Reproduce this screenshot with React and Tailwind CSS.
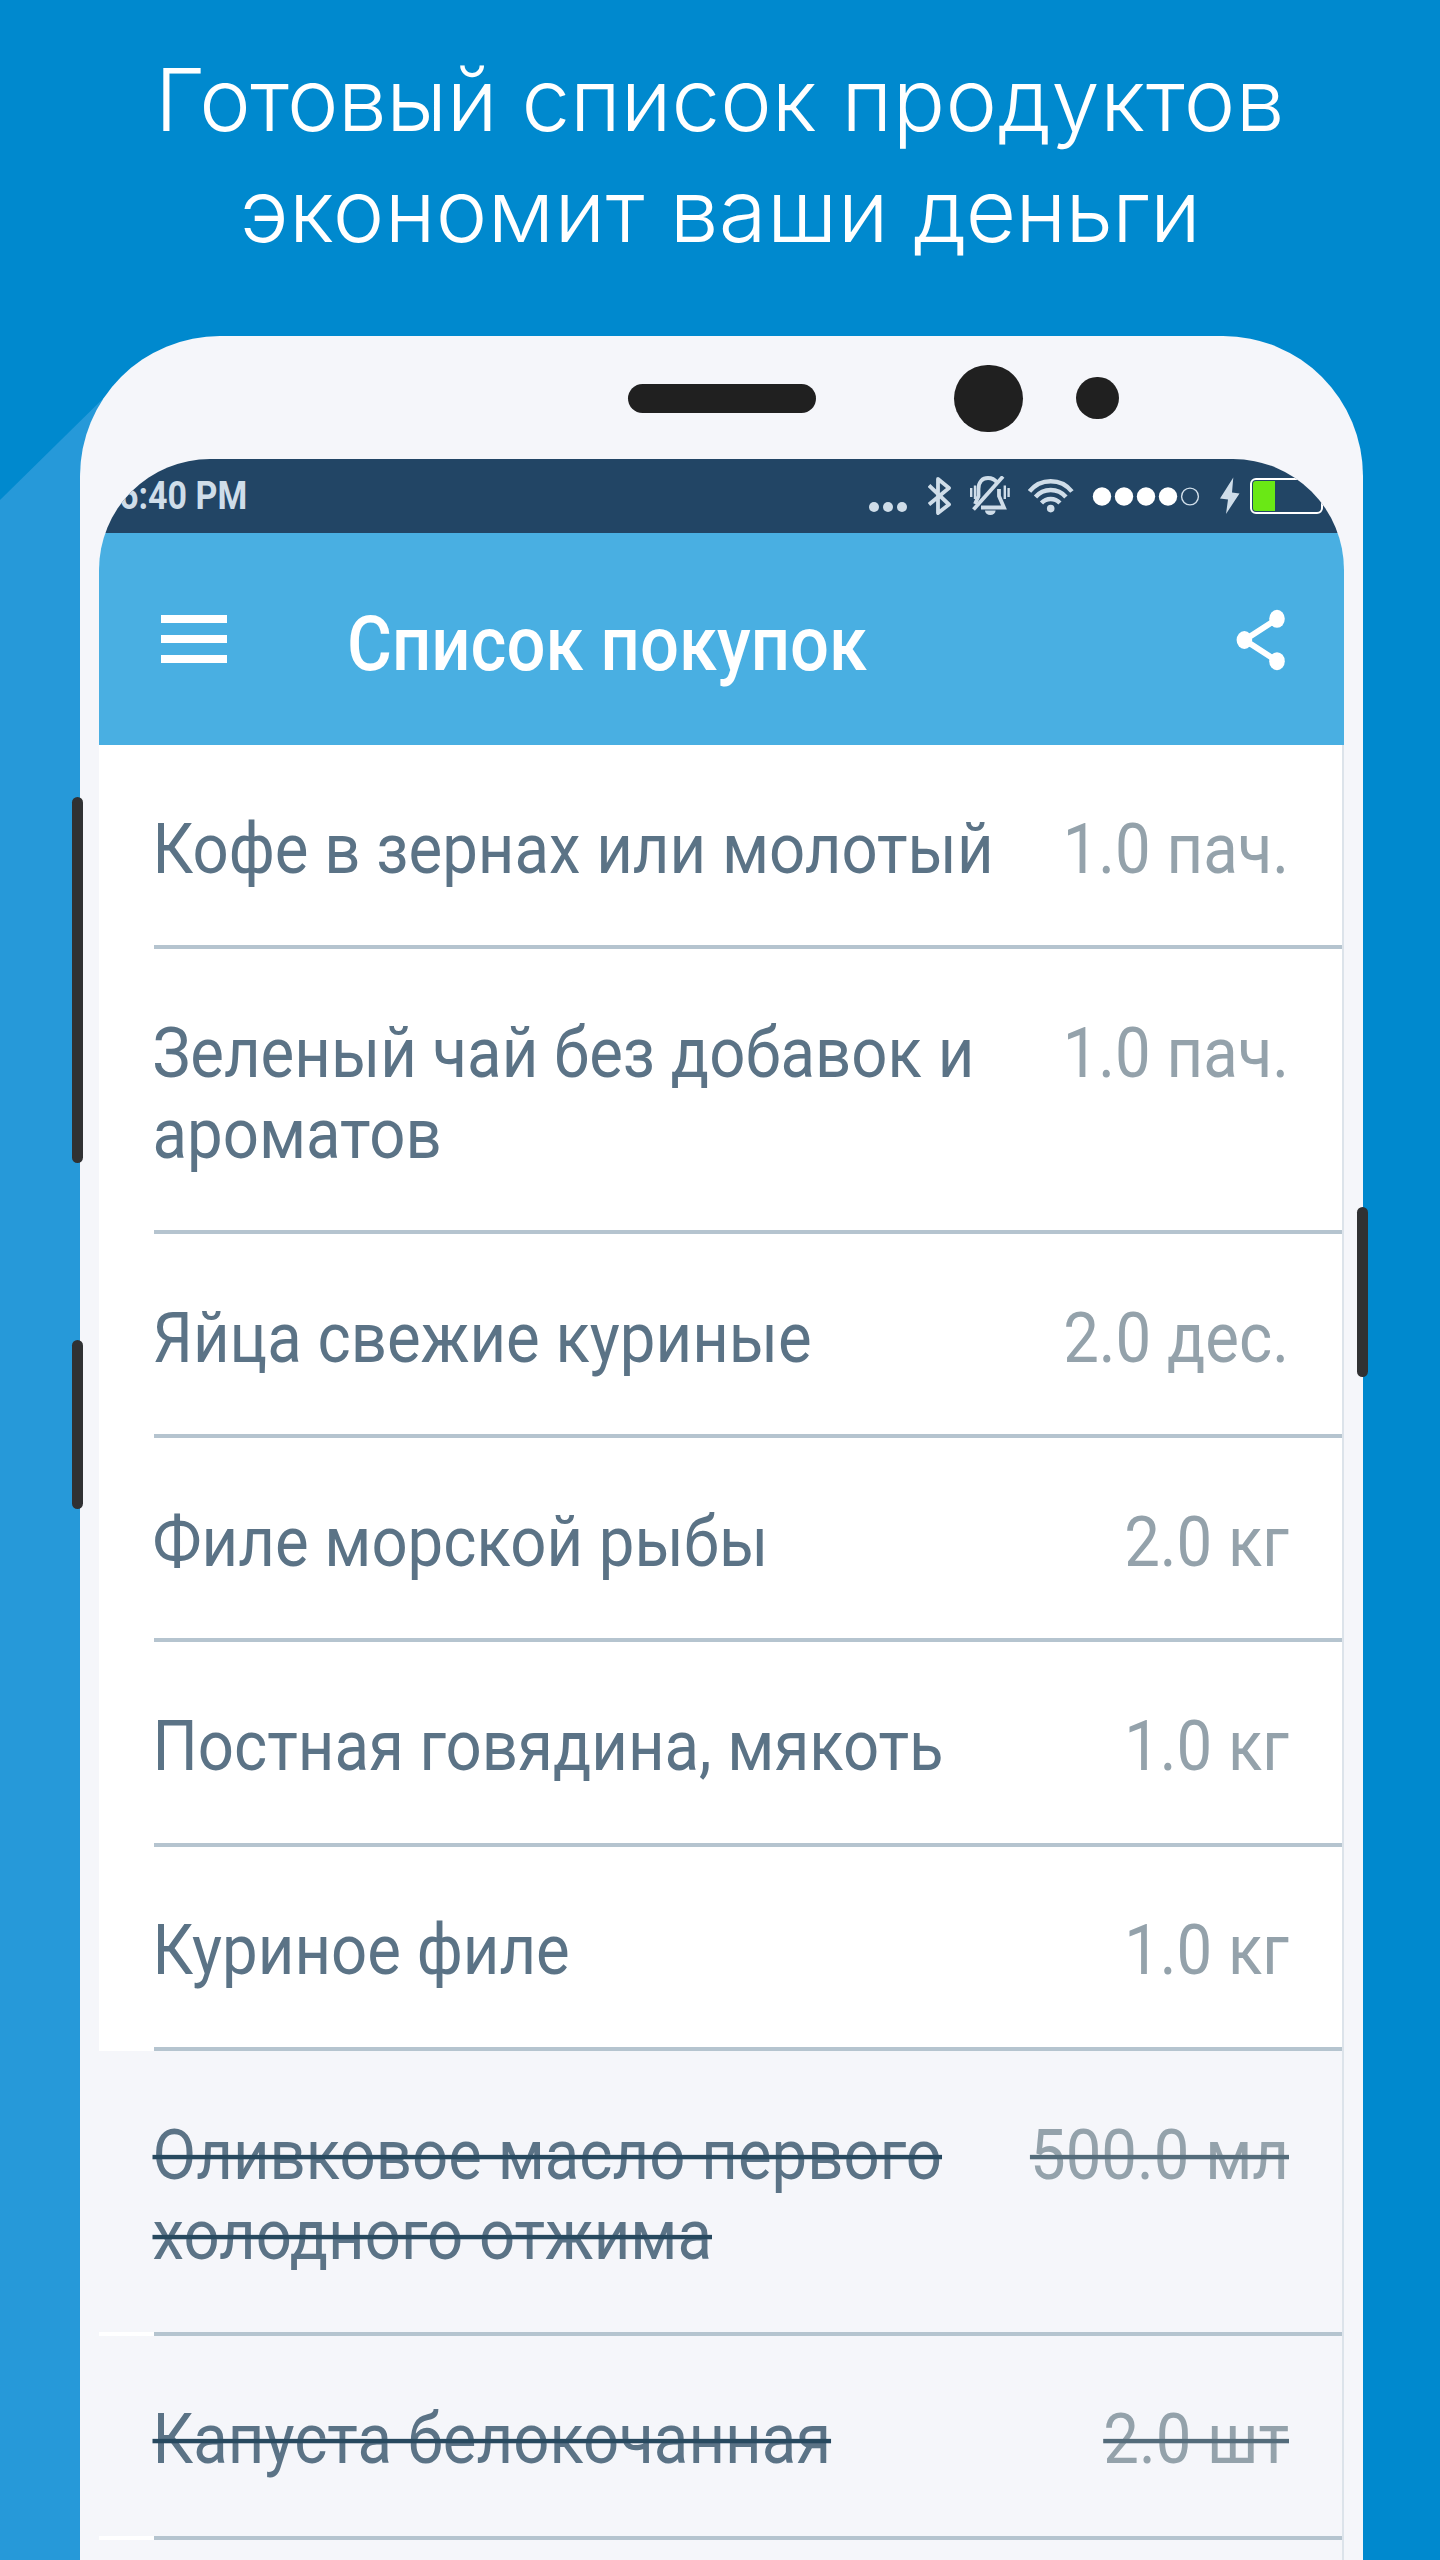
import clsx from "clsx";

const ITEMS = [
  { name: ["Кофе в зернах или молотый"], amount: "1.0 пач." },
  { name: ["Зеленый чай без добавок и", "ароматов"], amount: "1.0 пач." },
  { name: ["Яйца свежие куриные"], amount: "2.0 дес." },
  { name: ["Филе морской рыбы"], amount: "2.0 кг" },
  { name: ["Постная говядина, мякоть"], amount: "1.0 кг" },
  { name: ["Куриное филе"], amount: "1.0 кг" },
  { name: ["Оливковое масло первого", "холодного отжима"], amount: "500.0 мл", done: true },
  { name: ["Капуста белокочанная"], amount: "2.0 шт", done: true },
];

export default function App() {
  return (
    <div className="relative h-[2560px] w-[1440px] overflow-hidden bg-[#0089ce] font-[Roboto,sans-serif]">
      {/* lighter diagonal band behind the phone */}
      <svg className="absolute left-0 top-0" width="200" height="2560">
        <path d="M0 500 L120 382 V2560 H0Z" fill="#2699d9" />
      </svg>

      <div className="relative flex flex-col items-center pt-[44px]">
        <h1 className="whitespace-nowrap text-center font-[Inter,sans-serif] text-[87px] font-light leading-[111px] text-white">
          <span className="tracking-[-6px]">Г</span>
          <span className="tracking-[-0.5px]">отовый</span> список{" "}
          <span className="tracking-[0.5px]">продуктов</span>
          <br />
          <span className="tracking-[0.4px]">экономит ваши</span>{" "}
          <span className="tracking-[-0.7px]">деньги</span>
        </h1>
        <Phone />
      </div>
    </div>
  );
}

function Phone() {
  return (
    <div className="relative mt-[70px] mr-[-3px] h-[2300px] w-[1283px] shrink-0 rounded-t-[140px] bg-[#f5f6fa] px-[19px]">
      {/* side buttons */}
      <div className="absolute left-[-8px] top-[461px] h-[366px] w-[11px] rounded-full bg-[#303133]" />
      <div className="absolute left-[-8px] top-[1004px] h-[169px] w-[11px] rounded-full bg-[#303133]" />
      <div className="absolute right-[-5px] top-[871px] h-[170px] w-[11px] rounded-full bg-[#303133]" />

      <div className="flex h-[123px] items-center pl-[529px] pt-px">
        <div className="h-[29px] w-[188px] rounded-full bg-[#202020]" />
        <div className="ml-[138px] h-[67px] w-[69px] rounded-full bg-[#202020]" />
        <div className="ml-[53px] h-[42px] w-[43px] rounded-full bg-[#202020]" />
      </div>

      <div className="h-[2200px] overflow-hidden rounded-t-[111px] bg-white">
        <StatusBar />
        <TitleBar />
        <div className="border-r-2 border-[#dce3ea]">
          {ITEMS.map((item) => (
            <ListRow key={item.name[0]} item={item} />
          ))}
          <div className="h-20 bg-[#f5f6fa]" />
        </div>
      </div>
    </div>
  );
}

function StatusBar() {
  return (
    <div className="flex h-[74px] items-center bg-[#224565] pl-[20px] pr-[21px] text-[#cfdde9]">
      <span className="scale-y-[1.115] text-[34px] font-bold leading-10">6:40 PM</span>

      <svg className="ml-auto" width="40" height="40" fill="currentColor">
        <circle cx="6" cy="31" r="5" />
        <circle cx="20" cy="31" r="5" />
        <circle cx="34" cy="31" r="5" />
      </svg>

      <svg className="ml-5" width="24" height="40" fill="none" stroke="currentColor" strokeWidth="3.8" strokeLinejoin="round">
        <path d="M1 9.5 L21 28.5 L10 37 V3 L21 12 L1 28.5" />
      </svg>

      <svg className="ml-[18px]" width="40" height="40" fill="none" stroke="currentColor" strokeWidth="3.8">
        <path d="M5 28 L8.5 20 V13 C8.5 5.5 12.5 2 18 2 C22 2 25 3.8 27 6.5" />
        <path d="M29 13 V20 L34 31.5 H11" />
        <path d="M33 0.5 L3.5 33.5" />
        <path d="M15 34.5 a5.3 4.5 0 0 0 10.6 0z" fill="currentColor" stroke="none" />
        <path d="M1.2 12 V21 M5 9.5 V23 M34.8 9.5 V23 M38.6 12 V21" strokeWidth="2.4" />
      </svg>

      <svg className="ml-[18px]" width="46" height="40" fill="none" stroke="currentColor" strokeWidth="4.4">
        <path d="M1.5 15.5 A27 27 0 0 1 43.9 15.5" />
        <path d="M7.5 21 A20 20 0 0 1 37.9 21" />
        <path d="M13.5 27 A12.5 12.5 0 0 1 31.9 27" />
        <circle cx="22.7" cy="32.6" r="3.8" fill="currentColor" stroke="none" />
      </svg>

      <svg className="ml-[18px]" width="108" height="40" fill="#fff">
        <circle cx="10" cy="20.5" r="9.2" />
        <circle cx="32" cy="20.5" r="9.2" />
        <circle cx="54" cy="20.5" r="9.2" />
        <circle cx="76" cy="20.5" r="9.2" />
        <circle cx="98" cy="20.5" r="8.4" fill="none" stroke="#cfdde9" strokeWidth="1.4" />
      </svg>

      <svg className="ml-5" width="20" height="40" fill="currentColor">
        <path d="M13.3 1.5 L0 22.5 L8 23.5 L6 38 L19.5 17.5 L12 16.5Z" />
      </svg>

      <div className="ml-[10px] h-[36px] w-[73px] rounded-[6px] border-2 border-white p-px">
        <div className="h-full w-[22px] rounded-l-[3px] bg-[#6ae815]" />
      </div>
    </div>
  );
}

function TitleBar() {
  return (
    <div className="flex h-[212px] items-center bg-[#49afe2] pb-px pl-[62px] pr-[58px]">
      <div className="flex w-[66px] flex-col gap-3">
        <span className="h-2 bg-white" />
        <span className="h-2 bg-white" />
        <span className="h-2 bg-white" />
      </div>
      <h2 className="ml-[120px] mt-3 scale-y-[1.106] text-[68.8px] font-medium leading-[80px] text-white">
        Список покупок
      </h2>
      <svg className="ml-auto mt-0.5" width="50" height="62" fill="#fff" stroke="#fff">
        <path d="M41 10 L8.6 31 L41 52" fill="none" strokeWidth="6" />
        <ellipse cx="41" cy="9.8" rx="7.8" ry="9" stroke="none" />
        <ellipse cx="41" cy="52.2" rx="7.8" ry="9" stroke="none" />
        <ellipse cx="8.4" cy="31" rx="7.8" ry="9" stroke="none" />
      </svg>
    </div>
  );
}

function ListRow({ item }) {
  return (
    <div>
      <div
        className={clsx(
          "flex justify-between pb-[54.8px] pl-[53.5px] pr-[53px] pt-[64.7px] text-[63.5px] leading-[80.7px]",
          item.done ? "bg-[#f5f6fa]" : "bg-white"
        )}
      >
        <div className="text-[#5b7386]">
          {item.name.map((line) => (
            <div
              key={line}
              className={clsx(
                "w-fit scale-y-[1.106] whitespace-nowrap",
                item.done && "line-through decoration-[#27495f] decoration-[3.6px]"
              )}
            >
              {line}
            </div>
          ))}
        </div>
        <div
          className={clsx(
            "h-[80.7px] scale-y-[1.106] whitespace-nowrap text-[#94a2ab]",
            item.done && "line-through decoration-[#546c7b] decoration-[3.6px]"
          )}
        >
          {item.amount}
        </div>
      </div>
      <div className="ml-[55px] h-1 bg-[#b5c4cf]" />
    </div>
  );
}
